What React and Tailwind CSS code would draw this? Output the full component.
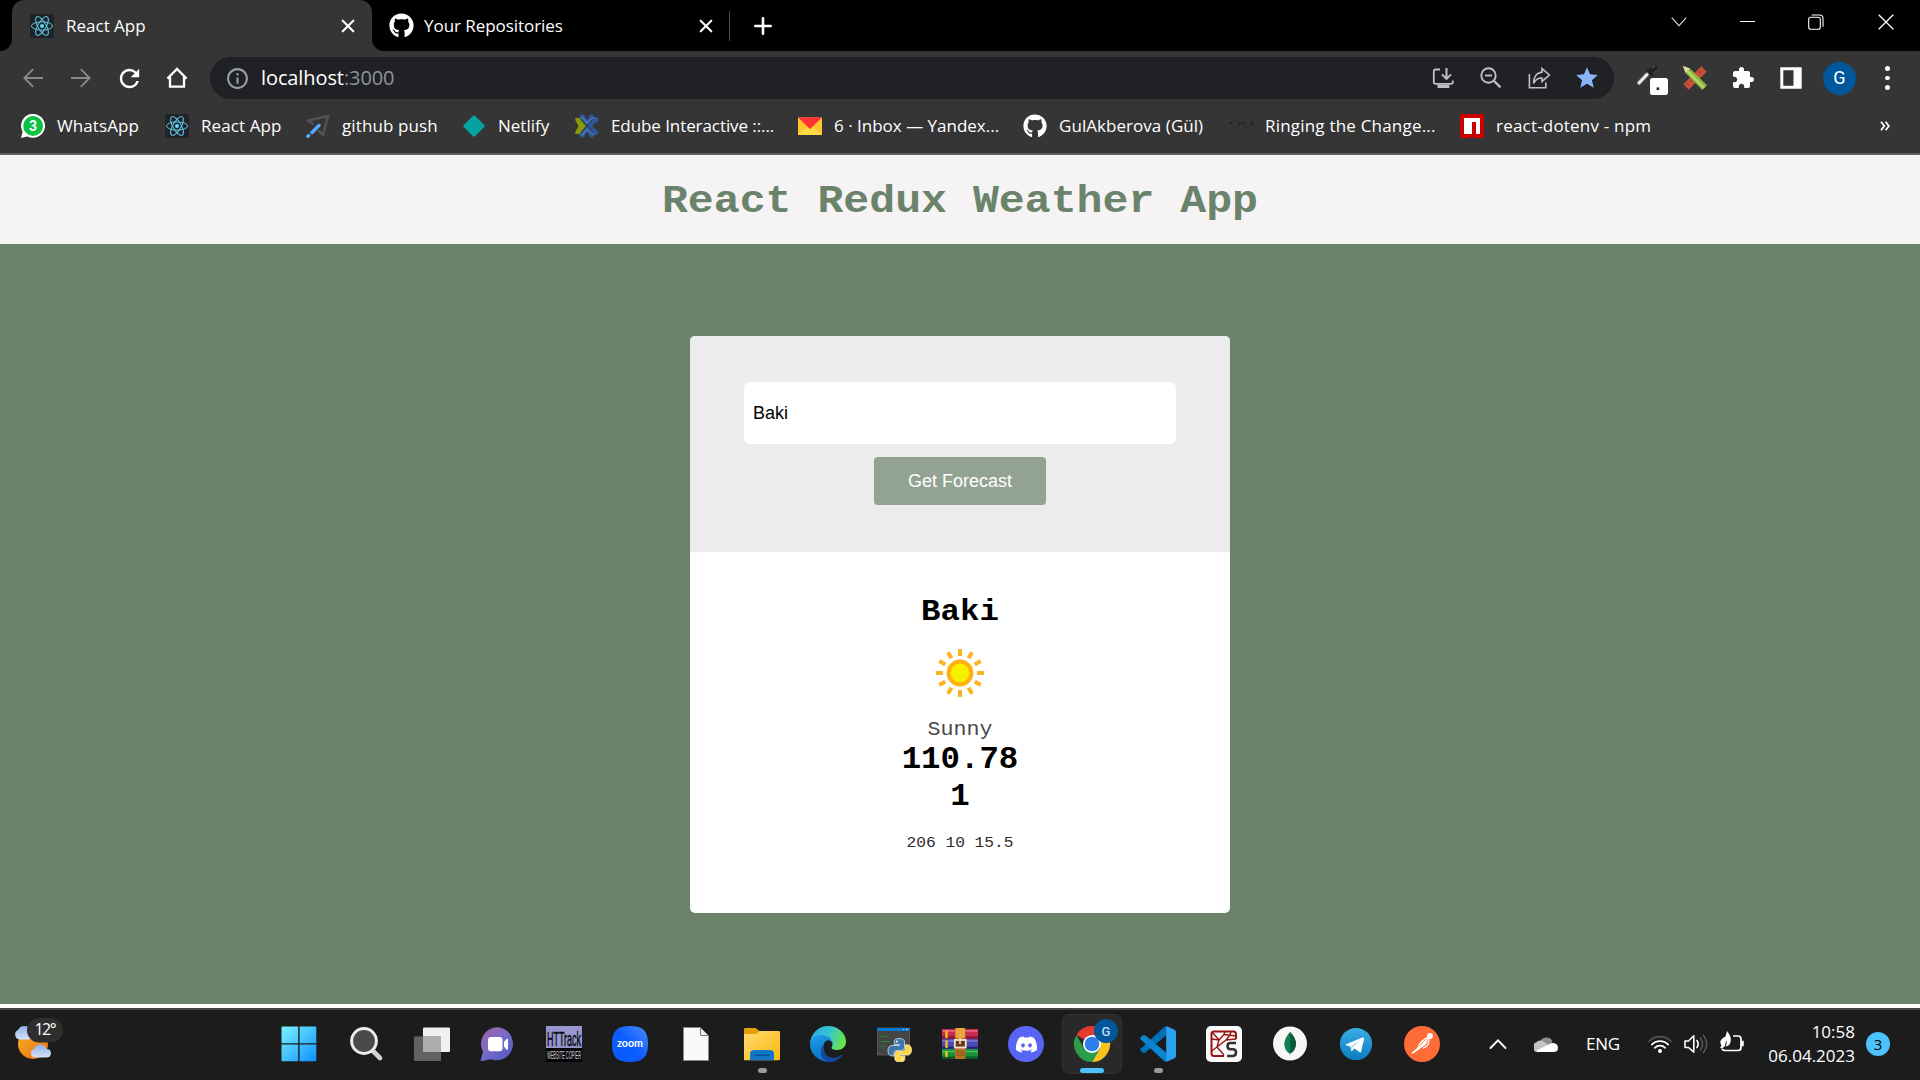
import React from "react";
import { FaGithub, FaDiscord } from "react-icons/fa";
import { MdRefresh, MdExtension, MdInfoOutline, MdStar } from "react-icons/md";

const UI = "font-['Open_Sans','Noto_Sans',sans-serif]";

function ReactLogo() {
  return (
    <svg viewBox="0 0 24 24" className="size-6 shrink-0">
      <rect width="24" height="24" rx="1.5" fill="#20232a" />
      <g fill="none" stroke="#5fcbe8" strokeWidth="1">
        <ellipse cx="12" cy="12" rx="10.6" ry="4.1" />
        <ellipse cx="12" cy="12" rx="10.6" ry="4.1" transform="rotate(60 12 12)" />
        <ellipse cx="12" cy="12" rx="10.6" ry="4.1" transform="rotate(120 12 12)" />
      </g>
      <circle cx="12" cy="12" r="2" fill="#61dafb" />
    </svg>
  );
}

function CloseGlyph({ className }) {
  return (
    <svg viewBox="0 0 14 14" className={className} stroke="#fff" strokeWidth="2.1" strokeLinecap="round">
      <path d="M1.7 1.7 12.3 12.3M12.3 1.7 1.7 12.3" />
    </svg>
  );
}

function TabStrip() {
  return (
    <div className="flex h-[51px] w-full bg-black">
      <div className="w-3 bg-[#353535]"><div className="h-full rounded-br-[12px] bg-black" /></div>
      <div className="flex w-[360px] items-center rounded-t-[12px] bg-[#353535] pl-[18px]">
        <ReactLogo />
        <span className="ml-3 w-[275px] text-[17px]">React App</span>
        <CloseGlyph className="size-[14px] shrink-0" />
      </div>
      <div className="w-3 bg-[#353535]"><div className="h-full rounded-bl-[12px] bg-black" /></div>
      <div className="flex items-center">
        <FaGithub className="ml-[5px] size-[25px]" />
        <span className="ml-[10px] w-[275px] text-[17px] tracking-[-0.05px]">Your Repositories</span>
        <CloseGlyph className="size-[14px]" />
        <div className="ml-[16px] h-[30px] w-px bg-[#4b4b4b]" />
        <svg viewBox="0 0 18 18" className="ml-[24px] size-[18px]" stroke="#fff" strokeWidth="2.6" strokeLinecap="round">
          <path d="M9 1.3V16.7M1.3 9H16.7" />
        </svg>
      </div>
      <div className="ml-auto flex h-[43px] items-center">
        <svg viewBox="0 0 16 10" className="mr-[53px] h-[10px] w-4" fill="none" stroke="#ddd" strokeWidth="1.1"><path d="M.7.7 8 8.6 15.3.7" /></svg>
        <div className="mr-[53px] h-px w-[15px] bg-white" />
        <svg viewBox="0 0 16 16" className="mr-[54px] size-4" fill="none" stroke="#fff" strokeWidth="1.1">
          <rect x=".7" y="3.3" width="11.6" height="12" rx="2" />
          <path d="M3.6 1H11.5Q15 1 15 4.6V12.8" />
        </svg>
        <svg viewBox="0 0 16 16" className="mr-[26px] size-4" stroke="#fff" strokeWidth="1.3"><path d="M.7.7 15.3 15.3M15.3.7.7 15.3" /></svg>
      </div>
    </div>
  );
}

function Arrow({ flip }) {
  return (
    <svg viewBox="0 0 24 24" className={flip ? "size-6 rotate-180" : "size-6"} fill="none" stroke="#8a8a8a" strokeWidth="1.9">
      <path d="M22 12H3.500M12.200 3.200 3.400 12 12.200 20.800" />
    </svg>
  );
}

function Toolbar() {
  return (
    <div className="flex h-[54px] items-center bg-[#353535]">
      <div className="ml-[21px] flex w-[189px] items-center gap-6">
        <Arrow />
        <Arrow flip />
        <MdRefresh className="-mx-[2.5px] size-[29px]" />
        <svg viewBox="0 0 24 24" className="size-6" fill="none" stroke="#fff" strokeWidth="2.3">
          <path d="M5 11V20.7H19V11M2.4 12.6 12 3 21.6 12.6" />
        </svg>
      </div>
      <div className="flex h-[42px] w-[1404px] items-center rounded-full bg-[#202124] pl-[15px]">
        <MdInfoOutline className="size-[25px] text-[#9aa0a6]" />
        <div className="ml-[11px] flex-1 text-[20px] leading-[42px] tracking-[-0.1px]">
          localhost<span className="text-[#8f9397]">:3000</span>
        </div>
        <div className="mr-[15px] flex items-center gap-6">
          <svg viewBox="0 0 24 24" className="size-6" fill="none" stroke="#c0c1c2" strokeWidth="1.8">
            <path d="M9 3.5H4.5Q2.8 3.5 2.8 5.2V16Q2.8 17.8 4.5 17.8H20Q21.8 17.8 21.8 16V14.5" />
            <path d="M15.5 2V12.6M11 8.4 15.5 12.9 20 8.4" strokeWidth="2" />
            <path d="M6.5 20.4H18.3" strokeWidth="3.2" />
          </svg>
          <svg viewBox="0 0 24 24" className="size-6" fill="none" stroke="#c0c1c2" strokeWidth="1.9">
            <circle cx="9.5" cy="9.5" r="7.2" /><path d="M15 15 21.5 21.3" strokeWidth="2.3" /><path d="M6 9.5H13" />
          </svg>
          <svg viewBox="0 0 24 24" className="size-6" fill="none" stroke="#c0c1c2" strokeWidth="1.6">
            <path d="M2.4 8V21.7H18.8V16.5" />
            <path d="M15 2.6 22.4 9 15 15.4V12C11 11.8 8.6 13.4 6.6 17.4 6.6 11 9.8 6.6 15 6.1Z" />
          </svg>
          <MdStar className="-mx-[1px] size-[26px] text-[#8ab4f8]" />
        </div>
      </div>
      <svg viewBox="0 0 34 34" className="ml-[21px] size-[34px]">
        <path d="M4 22 12 13.500" stroke="#6f6f6f" strokeWidth="4.400" strokeLinecap="round" />
        <path d="M4 22 12 13.500" stroke="#e9e9e9" strokeWidth="2.800" strokeLinecap="round" />
        <path d="M12.500 9.500 17 14" stroke="#202020" strokeWidth="2.400" strokeLinecap="round" />
        <path d="M15.500 10.500 20 6" stroke="#202020" strokeWidth="5" strokeLinecap="round" />
        <path d="M17.500 6.500 19.500 4.800" stroke="#555" strokeWidth="1.500" strokeLinecap="round" />
        <rect x="15" y="17" width="18" height="17" rx="2.5" fill="#fff" />
        <rect x="21.6" y="26.4" width="2.6" height="2.6" fill="#222" />
      </svg>
      <svg viewBox="0 0 24 24" className="ml-[14px] size-6">
        <path d="M3 21 21 3" stroke="#c8503a" strokeWidth="7.6" />
        <path d="M4 17l2 2M7 14l2 2M16 5l2 2" stroke="#8f3020" strokeWidth="1" />
        <path d="M0 0 7 2.5 24 19.2 19.2 24 2.5 7Z" fill="#8bb63f" />
        <path d="M4.6 5.2 21.2 22" stroke="#b7dc6a" strokeWidth="2" />
        <path d="M0 0 7 2.5 2.5 7Z" fill="#e9d6a5" />
      </svg>
      <MdExtension className="ml-[24px] size-6" />
      <svg viewBox="0 0 24 24" className="ml-[24px] size-6">
        <path fill="#fff" fillRule="evenodd" d="M1.3 1.3H22.7V22.7H1.3ZM4.3 4.3V19.7H14.5V4.3Z" />
      </svg>
      <div className="ml-[20px] flex size-[33px] items-center justify-center rounded-full bg-[#01579b] font-[Roboto,sans-serif] text-[18px] leading-none">G</div>
      <div className="ml-[29px] flex flex-col gap-[5px]">
        <div className="size-[4.500px] rounded-full bg-white" />
        <div className="size-[4.500px] rounded-full bg-white" />
        <div className="size-[4.500px] rounded-full bg-white" />
      </div>
    </div>
  );
}

function WhatsAppIcon() {
  return (
    <svg viewBox="0 0 24 24" className="size-6">
      <path d="M0 24 1.6 17.8A12 12 0 1 1 6.3 22.4Z" fill="#fff" />
      <circle cx="12.1" cy="12" r="9.9" fill="#0dc143" />
      <text x="12" y="17" fontSize="14" fontWeight="700" textAnchor="middle" fill="#fff" fontFamily="Roboto">3</text>
    </svg>
  );
}

function PushIcon() {
  return (
    <svg viewBox="0 0 24 24" className="size-6" fill="none" strokeLinecap="round">
      <path d="M2 6.5 22 2 17 21 13 17M2 6.5 7 10" stroke="#505254" strokeWidth="2.6" strokeLinejoin="round" />
      <path d="M6 18.500 13 11.500M1.900 22.300 2.600 21.600" stroke="#54aeff" strokeWidth="3.4" />
    </svg>
  );
}

function NetlifyIcon() {
  return (
    <svg viewBox="0 0 24 24" className="size-6">
      <rect x="4" y="4" width="16" height="16" rx="1.4" transform="rotate(45 12 12)" fill="#05a3a0" />
    </svg>
  );
}

function EdubeIcon() {
  return (
    <svg viewBox="0 0 24 24" className="size-6">
      <path d="M0 4H4.500L11 12 4.500 20H0L4 12Z" fill="#8b9a08" />
      <path d="M4 3Q7-1 9 1L12 6 15 1Q17-1 20 3 25 3 23 7L17 12 23 17Q25 21 20 21 17 25 15 23L12 18 9 23Q7 25 4 21L11 12Z" fill="#2f5795" />
      <path d="M6.500 2.500 12 9 19 3.500M19 20.500 12 15 6.500 21.500" stroke="#4470b3" strokeWidth="2.600" fill="none" />
      <path d="M0 5.500H4L9.500 12 4 18.500H0L3.500 12Z" fill="#8b9a08" />
      <path d="M12 12 6 5M12 12 6 19M12 12 18 5M12 12 18 19" stroke="#23334c" strokeWidth="1" />
    </svg>
  );
}

function YandexMailIcon() {
  return (
    <svg viewBox="0 0 24 24" className="size-6">
      <rect y="3.5" width="24" height="17.5" fill="#ffc52f" />
      <path d="M0 21 12 11 24 21Z" fill="#ffdc46" />
      <path d="M0 3.5H24L12 15Z" fill="#ff3333" />
    </svg>
  );
}

function GlassesIcon() {
  return (
    <svg viewBox="0 0 24 24" className="size-6" fill="none" stroke="#2a2a2a" strokeWidth=".9">
      <path d="M2.500 8.500Q2.800 13 6.500 13 10.500 13 10.500 8.500M13.800 8.500Q14 13 17.800 13 21.300 13 21.700 8.500" />
      <path d="M1.500 7.500V10.500M23 7.500V10.500M10.500 8V10M13.600 8V10" strokeWidth="1.6" stroke="#1f1f1f" />
    </svg>
  );
}

function NpmIcon() {
  return (
    <svg viewBox="0 0 24 24" className="size-6">
      <rect width="24" height="24" fill="#cb0000" />
      <path d="M4 4H20V20H16V8H12V20H4Z" fill="#fff" />
    </svg>
  );
}

const bookmarks = [
  { icon: <WhatsAppIcon />, label: "WhatsApp", cls: "w-[83px] tracking-[0.1px]" },
  { icon: <ReactLogo />, label: "React App", cls: "w-[80px] tracking-[0.1px]" },
  { icon: <PushIcon />, label: "github push", cls: "w-[95px] tracking-[0.1px]" },
  { icon: <NetlifyIcon />, label: "Netlify", cls: "w-[52px]" },
  { icon: <EdubeIcon />, label: "Edube Interactive ::...", cls: "w-[162px] tracking-[-0.08px]" },
  { icon: <YandexMailIcon />, label: "6 · Inbox — Yandex...", cls: "w-[164px]" },
  { icon: <FaGithub className="size-6" />, label: "GulAkberova (Gül)", cls: "w-[145px] tracking-[0.05px]" },
  { icon: <GlassesIcon />, label: "Ringing the Change...", cls: "w-[170px] tracking-[0.2px]" },
  { icon: <NpmIcon />, label: "react-dotenv - npm", cls: "w-[156px] tracking-[0.2px]" },
];

function BookmarksBar() {
  return (
    <div className="flex h-[50px] border-b-2 border-[#5f5f5f] bg-[#353535] pb-[6px]">
      <div className="flex flex-1 items-center gap-[25px] pl-[21px]">
        {bookmarks.map((b) => (
          <div key={b.label} className="flex shrink-0 items-center gap-3">
            {b.icon}
            <span className={`${b.cls} text-[17px] leading-6 whitespace-nowrap`}>{b.label}</span>
          </div>
        ))}
      </div>
      <svg viewBox="0 0 10 10" className="mt-[16px] mr-[30px] size-[10px]" fill="none" stroke="#fff" strokeWidth="1.8">
        <path d="M1 .8 4.3 5 1 9.2M5.6.8 8.9 5 5.6 9.2" />
      </svg>
    </div>
  );
}

const rays = [0, 30, 60, 90, 120, 150, 180, 210, 240, 270, 300, 330];

function Sun() {
  return (
    <svg viewBox="-32 -32 64 64" className="mt-[12px] mb-[11px] size-16">
      {rays.map((a) => (
        <path key={a} d="M0-24V-17" stroke="#fdb423" strokeWidth="4" transform={`rotate(${a})`} />
      ))}
      <circle r="11.4" fill="#f9f000" stroke="#fdb00d" strokeWidth="4" />
    </svg>
  );
}

function WeatherPage() {
  return (
    <main className="flex h-[853px] flex-col border-b-4 border-white bg-[#6b836b] font-['Liberation_Mono',monospace] text-black">
      <header className="h-[89px] bg-[#f5f3f3]">
        <h1 className="translate-y-[2px] scale-y-90 text-center text-[43.2px] leading-[89px] font-bold text-[#6b836b]">React Redux Weather App</h1>
      </header>
      <section className="mx-auto mt-[92px] flex h-[577px] w-[540px] flex-col overflow-hidden rounded-[5px] bg-white">
        <form className="flex h-[216px] flex-col items-center bg-[#ececec] pt-[46px] font-['Liberation_Sans',Arial,sans-serif] text-[18px]">
          <div className="flex h-[62px] w-[432px] items-center rounded-[6px] bg-white pl-[9px]">Baki</div>
          <button type="button" className="mt-[13px] h-12 w-[172px] rounded-[4px] bg-[#93a393] text-white">Get Forecast</button>
        </form>
        <div className="flex flex-col items-center pt-[41px]">
          <h2 className="translate-y-[2px] scale-y-90 text-[32.4px] leading-9 font-bold">Baki</h2>
          <Sun />
          <p className="translate-y-[1px] scale-y-95 text-[21.6px] leading-6 text-[#484848]">Sunny</p>
          <p className="translate-y-[1px] scale-y-95 text-[32.4px] leading-[37px] font-bold">110.78</p>
          <p className="translate-y-[1px] scale-y-95 text-[32.4px] leading-[37px] font-bold">1</p>
          <p className="mt-[20px] scale-y-95 text-[16.2px] leading-[18px] text-[#2c2c2c]">206 10 15.5</p>
        </div>
      </section>
    </main>
  );
}

function WindowsIcon() {
  return (
    <svg viewBox="0 0 36 36" className="size-9">
      <defs><linearGradient id="win" gradientUnits="userSpaceOnUse" x1="0" y1="0" x2="36" y2="36"><stop stopColor="#7df3ff" /><stop offset="1" stopColor="#0a90ff" /></linearGradient></defs>
      <path fill="url(#win)" d="M.5 1.5Q.5.5 1.5.5H17.2V17.2H.5ZM18.6.5H34.3Q35.3.5 35.3 1.5V17.2H18.6ZM.5 18.6H17.2V35.3H1.5Q.5 35.3.5 34.3ZM18.6 18.6H35.3V34.3Q35.3 35.3 34.3 35.3H18.6Z" />
    </svg>
  );
}

function SearchIcon() {
  return (
    <svg viewBox="0 0 36 36" className="size-9" fill="none">
      <path d="M25 25 32 32" stroke="#cfd3d6" strokeWidth="4.6" strokeLinecap="round" />
      <circle cx="16" cy="15" r="12.4" fill="#4a4a4a" stroke="#ececee" strokeWidth="3" />
    </svg>
  );
}

function TaskViewIcon() {
  return (
    <svg viewBox="0 0 36 36" className="size-9">
      <rect x="9" y="1.5" width="27" height="24.5" rx="1" fill="#f0f0f0" />
      <rect x="0" y="10.5" width="27" height="24.5" rx="1" fill="#626262" />
      <path d="M9 10.5H27V26H9Z" fill="#adadad" />
    </svg>
  );
}

function ChatIcon() {
  return (
    <svg viewBox="0 0 36 36" className="size-9">
      <defs><linearGradient id="chat" x1="0" y1="0" x2=".9" y2="1"><stop stopColor="#a8609c" /><stop offset=".45" stopColor="#7b6cc6" /><stop offset="1" stopColor="#5059c9" /></linearGradient></defs>
      <path d="M18.3 1.2A16.6 16.6 0 1 1 10.5 33.2L1.2 35.2Q.3 35.2.7 34.2L3 25.6A16.6 16.6 0 0 1 18.3 1.2Z" fill="url(#chat)" />
      <rect x="8" y="11" width="14.5" height="14.3" rx="3" fill="#fff" />
      <path d="M24 16 26.5 13Q28 12 28 13.8V22.8Q28 24.5 26.5 23.5L24 20.5Z" fill="#fff" />
    </svg>
  );
}

function HTTrackIcon() {
  return (
    <svg viewBox="0 0 36 36" className="size-9 overflow-visible">
      <rect width="36" height="36" fill="#050508" />
      <rect width="36" height="22" fill="#9796cd" />
      <text x="1" y="20" fontSize="20" textLength="34" lengthAdjust="spacingAndGlyphs" fontFamily="Liberation Sans" fill="#0b0b14" stroke="#0b0b14" strokeWidth=".5">HTTrack</text>
      <text x="1" y="33" fontSize="11" textLength="34" lengthAdjust="spacingAndGlyphs" fontFamily="Liberation Sans" fill="#d9d9d9">WEBSITE COPIER</text>
    </svg>
  );
}

function ZoomIcon() {
  return (
    <svg viewBox="0 0 36 36" className="size-9">
      <defs><linearGradient id="zm" x1="0" y1="1" x2="1" y2="0"><stop offset=".5" stopColor="#0b5cff" /><stop offset="1" stopColor="#4f8dff" /></linearGradient></defs>
      <path d="M18 0C31 0 36 5 36 18S31 36 18 36 0 31 0 18 5 0 18 0Z" fill="url(#zm)" />
      <text x="18" y="20.8" fontSize="11" fontWeight="700" textAnchor="middle" textLength="26" lengthAdjust="spacingAndGlyphs" fontFamily="Lato" fill="#fff">zoom</text>
    </svg>
  );
}

function FileIcon() {
  return (
    <svg viewBox="0 0 36 36" className="size-9">
      <path d="M5.5 1.5H22.5L30.5 9.5V34.5H5.5Z" fill="#fafafa" stroke="#8a8a8a" />
      <path d="M22.5 1.5V9.5H30.5Z" fill="#ececec" stroke="#777" />
    </svg>
  );
}

function FolderIcon() {
  return (
    <svg viewBox="0 0 36 36" className="size-9">
      <defs><linearGradient id="fold" x1="0" y1="0" x2="1" y2="1"><stop stopColor="#ffd970" /><stop offset="1" stopColor="#fcb90f" /></linearGradient></defs>
      <path d="M0 3.2Q0 2 1.2 2H11.5L16 5.5V10H0Z" fill="#e3a007" />
      <path d="M0 8H12L15.5 5H34.8Q36 5 36 6.2V33Q36 34.2 34.8 34.2H0Z" fill="url(#fold)" />
      <path d="M6 34.2V28Q6 24 10 24H26Q30 24 30 28V34.2Z" fill="#1177c8" />
      <path d="M10.8 29.3H25.2" stroke="#0b4f8c" strokeWidth="1.6" />
    </svg>
  );
}

function EdgeIcon() {
  return (
    <svg viewBox="0 0 36 36" className="size-9">
      <defs>
        <linearGradient id="e1" x1="0" y1=".2" x2="1" y2=".5"><stop stopColor="#2aa9e0" /><stop offset=".5" stopColor="#35c4d4" /><stop offset="1" stopColor="#66e445" /></linearGradient>
        <linearGradient id="e2" x1="0" y1="0" x2=".3" y2="1"><stop stopColor="#1fa0e6" /><stop offset="1" stopColor="#0a6fc9" /></linearGradient>
      </defs>
      <path d="M0 18C.5 7.500 8.500 0 18 0 29 0 36 8 36 15.500 36 21 32 24 27.500 24 23 24 20.500 22.500 22 20.500 24 16 20 12 14 12 7 12 1 14 0 18Z" fill="url(#e1)" />
      <path d="M0 18C0 12.500 5 9 11.500 9 18 9 23 13 22.700 18.500 22 14 16.500 12.500 14.300 17 11.500 24 16 32 24 35 12 38.500 0 30 0 18Z" fill="url(#e2)" />
      <path d="M14 17.500C11 25 17 33 26 31.500 29 31 31.500 29 33.500 27.300 30 34 24 36.500 18 36 11 34 8.500 24 14 17.500Z" fill="#114a9c" />
    </svg>
  );
}

function PythonConsoleIcon() {
  return (
    <svg viewBox="0 0 36 36" className="size-9">
      <rect x="1.500" y="2" width="32" height="27" fill="#454545" stroke="#666" strokeWidth=".7" />
      <rect x="1.200" y="2" width="32.300" height="3" fill="#0078d4" />
      <path d="M27 3.500H28.500M30 3.500H32" stroke="#a6d4f7" />
      <path d="M5 10.500H12M5 15.500H14M5 20H9" stroke="#1e8b2c" strokeWidth="1.200" />
      <path d="M23 12.500C18.500 12.500 18.300 14.500 18.300 16V18.500H23.500V19.500H16C13 19.500 12 22 12 24.500S13 30 16 30H18V27Q18 24.300 21 24.300H26Q28.500 24.300 28.500 21.500V16Q28.500 12.500 23 12.500Z" fill="#3b77a8" stroke="#d8e2ea" strokeWidth=".8" />
      <path d="M24 36C28.500 36 28.800 34 28.800 32.500V30H23.500V29H31C34.500 29 35.500 26.500 35.500 24S34.500 18.800 31.500 18.800H29.500V22Q29.500 25.300 26.500 25.300H21.500Q18.800 25.300 18.800 28V32.500Q18.800 36 24 36Z" fill="#ffd745" stroke="#f6efcf" strokeWidth=".8" />
      <circle cx="20.800" cy="15.500" r="1" fill="#fff" /><circle cx="26.300" cy="33" r="1" fill="#fff" />
    </svg>
  );
}

function WinRarIcon() {
  return (
    <svg viewBox="0 0 36 36" className="size-9">
      <rect y="3" width="36" height="10" fill="#c62a50" /><path d="M0 5H36" stroke="#ea6d86" strokeWidth="1.500" /><path d="M0 11.500H36" stroke="#7c1230" strokeWidth="2" />
      <rect y="13" width="36" height="10" fill="#4b49b8" /><path d="M0 15H36" stroke="#7a7ae0" strokeWidth="1.500" /><path d="M0 21.800H36" stroke="#24226e" strokeWidth="2" />
      <rect y="23" width="36" height="9.500" fill="#17913a" /><path d="M0 25.500H36" stroke="#42c25e" strokeWidth="1.500" /><path d="M0 31.500H36" stroke="#0a5a22" strokeWidth="2" />
      <path d="M4.500 4.500V12M4.500 14.500V22M4.500 25V31" stroke="#f3c11e" strokeWidth="2.400" />
      <rect x="13" y="2" width="10.500" height="31" fill="#b5712c" />
      <rect x="13.500" y="2" width="9.500" height="10" rx="1.500" fill="#e9a63a" />
      <path d="M14 26H23M14 29H23" stroke="#8a4e1c" />
      <rect x="12.800" y="14" width="11" height="7.500" fill="#6d3c15" stroke="#eee3cf" strokeWidth="1.800" />
      <path d="M18 12V18" stroke="#f1e6d4" strokeWidth="1.600" />
    </svg>
  );
}

function DiscordIcon() {
  return (
    <div className="flex size-9 items-center justify-center rounded-full bg-[#5865f2]">
      <FaDiscord className="size-[23px]" />
    </div>
  );
}

function ChromeIcon() {
  return (
    <svg viewBox="0 0 36 36" className="size-9 overflow-visible">
      <path d="M18 18 2.400 9A18 18 0 0 1 33.600 9H18Z" fill="#e33b2e" />
      <path d="M18 9H33.600A18 18 0 0 1 18 36L25.800 22.500Z" fill="#fcc31e" />
      <path d="M2.400 9A18 18 0 0 0 18 36L25.800 22.500 10.200 22.500Z" fill="#2a9d49" />
      <circle cx="18" cy="18" r="9" fill="#fff" /><circle cx="18" cy="18" r="7.300" fill="#2f7de9" />
      <circle cx="32" cy="5" r="12" fill="#01579b" />
      <text x="32" y="9.600" fontSize="13" fontWeight="500" textAnchor="middle" fill="#b9dcf7" fontFamily="Roboto">G</text>
    </svg>
  );
}

function VSCodeIcon() {
  return (
    <svg viewBox="0 0 36 36" className="size-9">
      <path d="M26 9.500 5.500 26.500Q4 27.500 2.600 26.500L.8 25Q-.4 23.800.8 22.600L24.500.8 26.500.4Z" fill="#0070b8" />
      <path d="M26 26.500 5.500 9.500Q4 8.500 2.600 9.500L.8 11Q-.4 12.200.8 13.400L24.500 35.200 26.500 35.600Z" fill="#0a84d3" />
      <path d="M26.200 0 34.500 3.800Q36 4.500 36 6V30Q36 31.500 34.500 32.200L26.200 36Z" fill="#27a5f2" />
    </svg>
  );
}

function SpyderIcon() {
  return (
    <svg viewBox="0 0 36 36" className="size-9">
      <rect width="36" height="36" rx="5" fill="#fafafa" />
      <g fill="none" stroke="#981414" strokeWidth="1.400" strokeLinejoin="round">
        <path d="M18 30H8Q5.500 30 5.500 27.500V8Q5.500 5.500 8 5.500H27.500Q30 5.500 30 8V13" strokeWidth="2" />
        <path d="M6 6 13 14 18 8.500 30 10M13 14 11 21 18 29M11 21 5.500 25M5.500 13 13 14M18 8.500 19 5.500M11 21 20 14 24 9 25 5.500M20 14 30 13" />
      </g>
      <path d="M30 17H24.500Q21.500 17 21.500 20T24.500 23.300H27Q30 23.300 30 26.500T27 30H21" fill="none" stroke="#333" strokeWidth="2.600" />
    </svg>
  );
}

function MongoIcon() {
  return (
    <svg viewBox="0 0 36 36" className="size-9">
      <circle cx="18" cy="17.500" r="17" fill="#f7f7f7" />
      <path d="M18 6Q24 12 24 18 23.500 24.500 18.300 27.500L18 29.500 17.600 27.500Q12.500 24.500 12.300 18 12.500 12 18 6Z" fill="#128050" />
      <path d="M18 6Q24 12 24 18 23.500 24.500 18.300 27.500Z" fill="#0b5b3b" />
    </svg>
  );
}

function TelegramIcon() {
  return (
    <svg viewBox="0 0 36 36" className="size-9">
      <defs><linearGradient id="tg" x1="0" y1="0" x2="0" y2="1"><stop stopColor="#37aee2" /><stop offset="1" stopColor="#0c7dc0" /></linearGradient></defs>
      <circle cx="18" cy="18" r="16.100" fill="url(#tg)" />
      <path d="M8 18.200 24.500 11.600Q26.400 11 26 13L23.200 25.400Q22.800 27 21.300 26L16.500 22.600 14 25Q13.200 25.500 13.100 24.200L12.200 20.500 8 19.200Q6.800 18.700 8 18.200Z" fill="#fff" />
      <path d="M12.600 20.300 22.500 14 14.400 21.700 13.700 24.600Z" fill="#b9d9ee" />
    </svg>
  );
}

function PostmanIcon() {
  return (
    <svg viewBox="0 0 36 36" className="size-9">
      <circle cx="18" cy="18" r="18" fill="#ff6c37" />
      <circle cx="26" cy="10" r="2.900" fill="#fff" />
      <path d="M23 11 25.500 13.500Q23 19 17 22L8.500 28 7.500 27 13.500 21.500Q15 15 23 11Z" fill="#fff" />
      <path d="M24 13 22 20.500 17.500 23M15 20 22 13" stroke="#ff6c37" strokeWidth=".8" fill="none" />
      <path d="M25 13.500Q25 19 21.500 21L19 22.500" stroke="#fff" strokeWidth="1.200" fill="none" />
    </svg>
  );
}

const apps = [
  { id: "start", icon: <WindowsIcon /> },
  { id: "search", icon: <SearchIcon /> },
  { id: "taskview", icon: <TaskViewIcon /> },
  { id: "chat", icon: <ChatIcon /> },
  { id: "httrack", icon: <HTTrackIcon /> },
  { id: "zoom", icon: <ZoomIcon /> },
  { id: "file", icon: <FileIcon /> },
  { id: "explorer", icon: <FolderIcon />, running: true },
  { id: "edge", icon: <EdgeIcon /> },
  { id: "python", icon: <PythonConsoleIcon /> },
  { id: "winrar", icon: <WinRarIcon /> },
  { id: "discord", icon: <DiscordIcon /> },
  { id: "chrome", icon: <ChromeIcon />, active: true },
  { id: "vscode", icon: <VSCodeIcon />, running: true },
  { id: "spyder", icon: <SpyderIcon /> },
  { id: "mongo", icon: <MongoIcon /> },
  { id: "telegram", icon: <TelegramIcon /> },
  { id: "postman", icon: <PostmanIcon /> },
];

function AppButton({ app }) {
  return (
    <div className={`mx-[3px] flex h-[60px] w-[60px] flex-col items-center rounded-[7px] pt-[11px] first:mr-1 first:ml-[2px] ${app.active ? "border border-[#333] bg-[#292929]" : "border border-transparent"}`}>
      {app.icon}
      {app.active && <div className="mt-[6px] h-[5px] w-6 rounded-full bg-[#4cc2ff]" />}
      {app.running && <div className="mt-[6px] h-[5px] w-[9px] rounded-full bg-[#9a9a9a]" />}
    </div>
  );
}

function WeatherWidget() {
  return (
    <svg viewBox="0 0 50 44" className="ml-[14px] h-[44px] w-[50px]">
      <defs>
        <linearGradient id="ws" x1="0" y1="0" x2="1" y2="1"><stop stopColor="#f2b02a" /><stop offset="1" stopColor="#f2700e" /></linearGradient>
        <linearGradient id="wc" x1="0" y1="0" x2="0" y2="1"><stop stopColor="#8fb2ec" /><stop offset="1" stopColor="#d5e1f7" /></linearGradient>
      </defs>
      <circle cx="19" cy="26" r="15" fill="url(#ws)" />
      <path d="M6 21.500A5 5 0 0 1 4 12Q6 8 10 8 16 8 17 13 20 21.500 14 21.500Z" fill="url(#wc)" />
      <path d="M20 39.500A4.500 4.500 0 0 1 20 31Q21 26.500 26.500 26.500 31.500 27 32.500 31 37 31 37 35.300 37 39.500 32 39.500Z" fill="url(#wc)" />
      <rect x="13" y="0" width="36" height="24.500" rx="12.200" fill="#2e2e2e" />
      <text x="20.500" y="17.300" fontSize="16" textLength="22" fill="#fff" fontFamily="Open Sans">12°</text>
    </svg>
  );
}

function Tray() {
  return (
    <div className="ml-auto flex h-[68px] items-center pr-[30px]">
      <svg viewBox="0 0 18 12" className="mr-[27px] h-3 w-[18px]" fill="none" stroke="#fff" strokeWidth="1.900" strokeLinecap="round"><path d="M1.500 10 9 2.300 16.500 10" /></svg>
      <svg viewBox="0 0 24 24" className="mr-[28px] size-6">
        <path d="M6 10A7 7 0 0 1 18.500 9L14 16Z" fill="#8d8d8d" />
        <path d="M5 20A5 5 0 0 1 2 10.500Q6 6.500 11 10.500L21 17 10 20Z" fill="#c3c3c3" />
        <path d="M2.500 18.500 17.500 11Q24 10.800 24 16 24 20 19.500 20H5Q3.500 20 2.500 18.500Z" fill="#fff" />
      </svg>
      <span className="mr-[28px] w-[34px] text-[17px] tracking-[-0.2px]">ENG</span>
      <svg viewBox="0 0 24 20" className="mr-3 h-5 w-6" fill="none" strokeLinecap="round" strokeWidth="1.700">
        <path d="M1 7.500A15 15 0 0 1 23 7.500" stroke="#555" />
        <path d="M3.800 10.600A11.500 11.500 0 0 1 20.200 10.600M6.800 13.800A7.500 7.500 0 0 1 17.200 13.800" stroke="#fff" />
        <circle cx="12" cy="17" r="2" fill="#fff" />
      </svg>
      <svg viewBox="0 0 24 20" className="mr-3 h-5 w-6" fill="none" strokeLinecap="round" strokeLinejoin="round" strokeWidth="1.600">
        <path d="M1 7H4.500L9.800 1.800V18.200L4.500 13.500H1Z" stroke="#fff" />
        <path d="M13 6.500Q15.300 10 13 13.500" stroke="#fff" />
        <path d="M16.500 4Q20.500 10 16.500 16M19.500 1.500Q26 10 19.500 18.500" stroke="#555" />
      </svg>
      <svg viewBox="0 0 24 22" className="mr-[23px] h-[22px] w-6 -translate-y-[2px]" fill="none">
        <path d="M13 5H18Q21 5 21 8V16.500Q21 19.500 18 19.500H5Q3 19.500 2 18" stroke="#fff" strokeWidth="1.700" />
        <path d="M21.500 10.500H23V14.500H21.500Z" stroke="#fff" strokeWidth="1.500" />
        <path d="M7 0Q12 6 10.500 11 9.500 15.500 4.500 15.500L2 17.500 0 17 1.500 14.500Q-1 11 1.500 8.500 3 6.500 5.500 5.500Z" fill="#fff" />
        <path d="M6.500 10.500 5 16.500" stroke="#1c1c1c" strokeWidth="1" />
      </svg>
      <div className="w-[88px] text-right text-[17px] leading-6">
        <div>10:58</div>
        <div>06.04.2023</div>
      </div>
      <div className="ml-[11px] flex size-6 items-center justify-center rounded-full bg-[#4cc2ff] text-[15px] leading-none text-black">3</div>
    </div>
  );
}

function Taskbar() {
  return (
    <footer className="flex h-[72px] border-t-2 border-[#444] bg-[#1c1c1c]">
      <div className="w-[267px] pt-[8px]"><WeatherWidget /></div>
      <div className="flex pt-1">
        {apps.map((a) => (
          <AppButton key={a.id} app={a} />
        ))}
      </div>
      <Tray />
    </footer>
  );
}

export default function App() {
  return (
    <div className={`flex h-[1080px] w-[1920px] flex-col overflow-hidden bg-[#1c1c1c] text-white ${UI}`}>
      <TabStrip />
      <Toolbar />
      <BookmarksBar />
      <WeatherPage />
      <Taskbar />
    </div>
  );
}
